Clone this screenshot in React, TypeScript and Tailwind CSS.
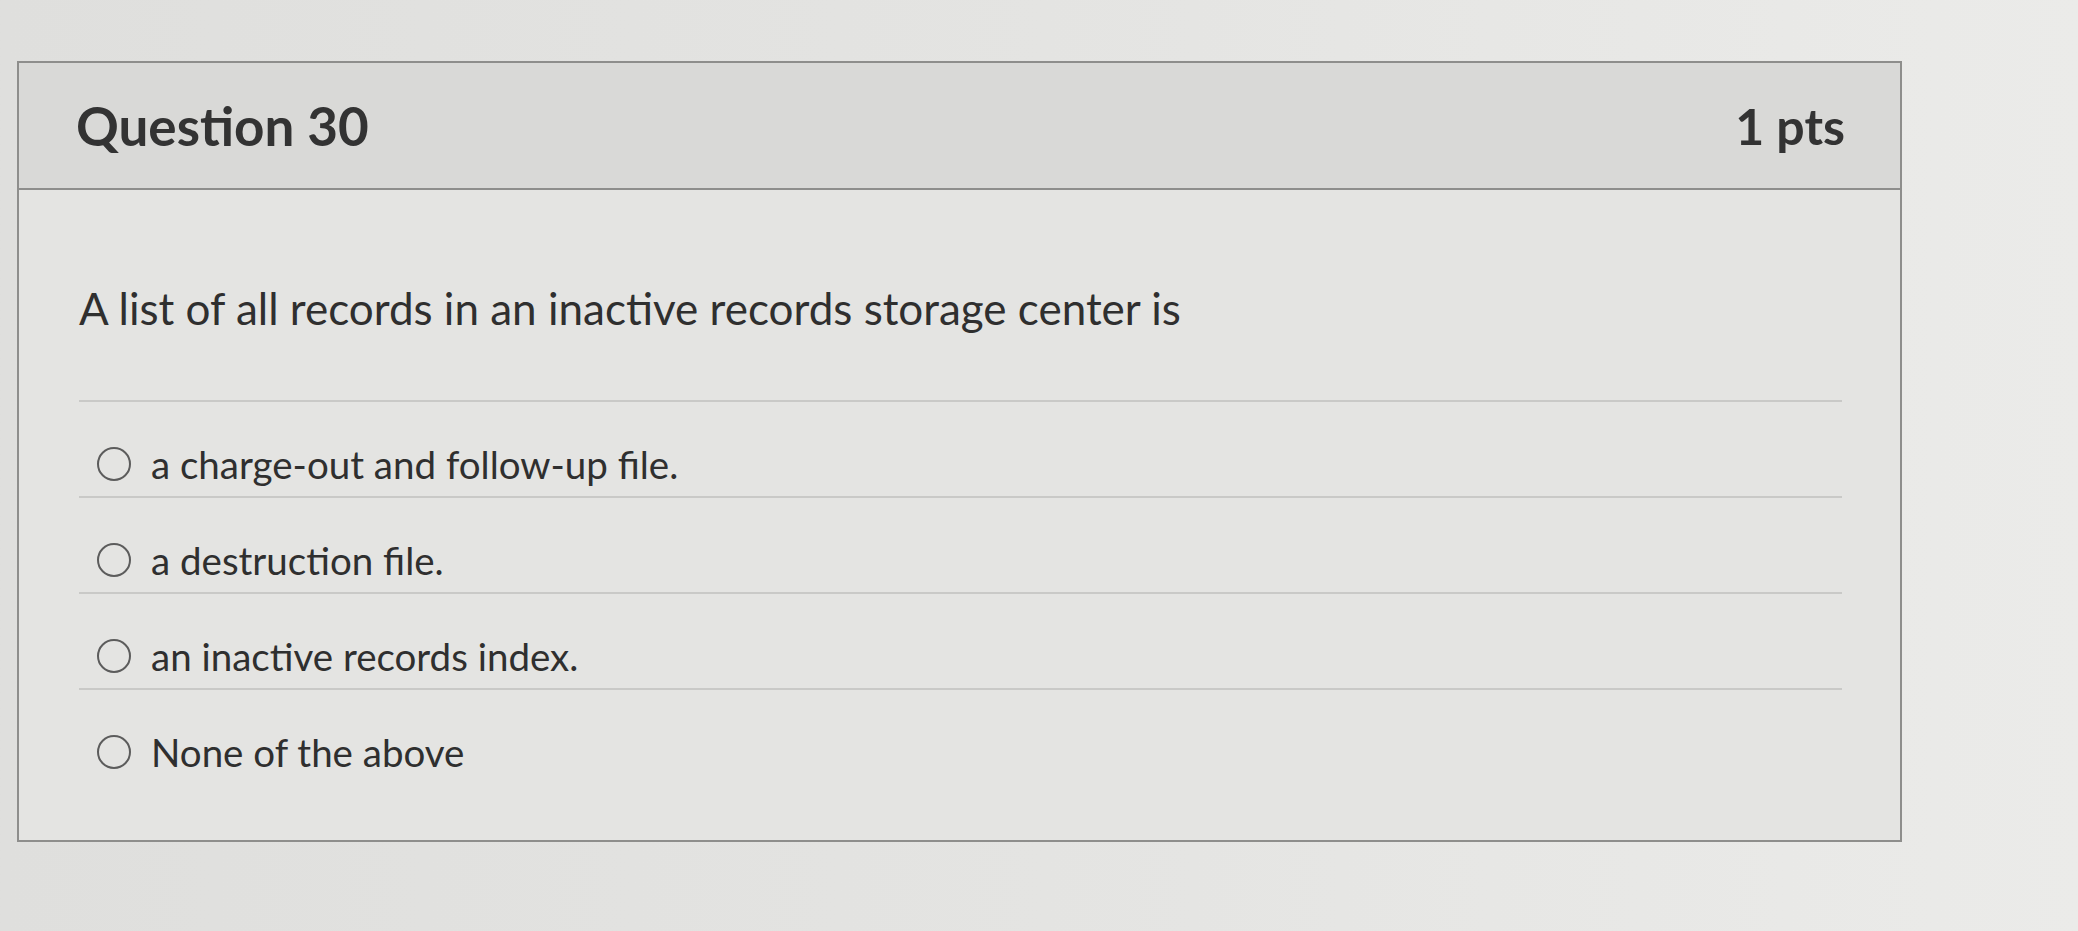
import React from "react";

const options = [
  "a charge-out and follow-up file.",
  "a destruction file.",
  "an inactive records index.",
  "None of the above",
];

export default function App() {
  return (
    <div
      className="w-[2078px] h-[931px] overflow-hidden bg-gradient-to-r from-[#dfdfdd] via-[#e4e4e2] to-[#ebebe9] pt-[61px] pl-[17px] text-[#2f2f2f]"
      style={{ fontFamily: "Lato, 'Open Sans', sans-serif" }}
    >
      <div className="w-[1885px] border-2 border-[#8e8e8c]">
        <div className="h-[127px] bg-[#d9d9d7] border-b-2 border-[#8e8e8c] flex items-center justify-between pl-[57px] pr-[55px]">
          <h2 className="text-[53px] font-bold leading-none text-[#333333]">Question 30</h2>
          <div className="text-[50px] font-bold leading-none text-[#333333]">1 pts</div>
        </div>
        <div className="bg-[#e4e4e2] pl-[60px] pr-[58px] pt-[94px] pb-[68px]">
          <p className="text-[44px] leading-[48px] pb-[68px]">
            A list of all records in an inactive records storage center is
          </p>
          <div>
            {options.map((o, i) => (
              <div
                key={i}
                className={
                  "flex items-center gap-[20px] pl-[18px] pt-[42px] " +
                  (i < options.length - 1 ? "pb-[12px] " : "pb-[0px] ") +
                  "border-t-2 border-[#c9c9c7]"
                }
              >
                <span className="w-[34px] h-[34px] rounded-full border-[2.5px] border-[#5c5c5c] shrink-0" />
                <span className="text-[38.5px] leading-[40px]">{o}</span>
              </div>
            ))}
          </div>
        </div>
      </div>
    </div>
  );
}
